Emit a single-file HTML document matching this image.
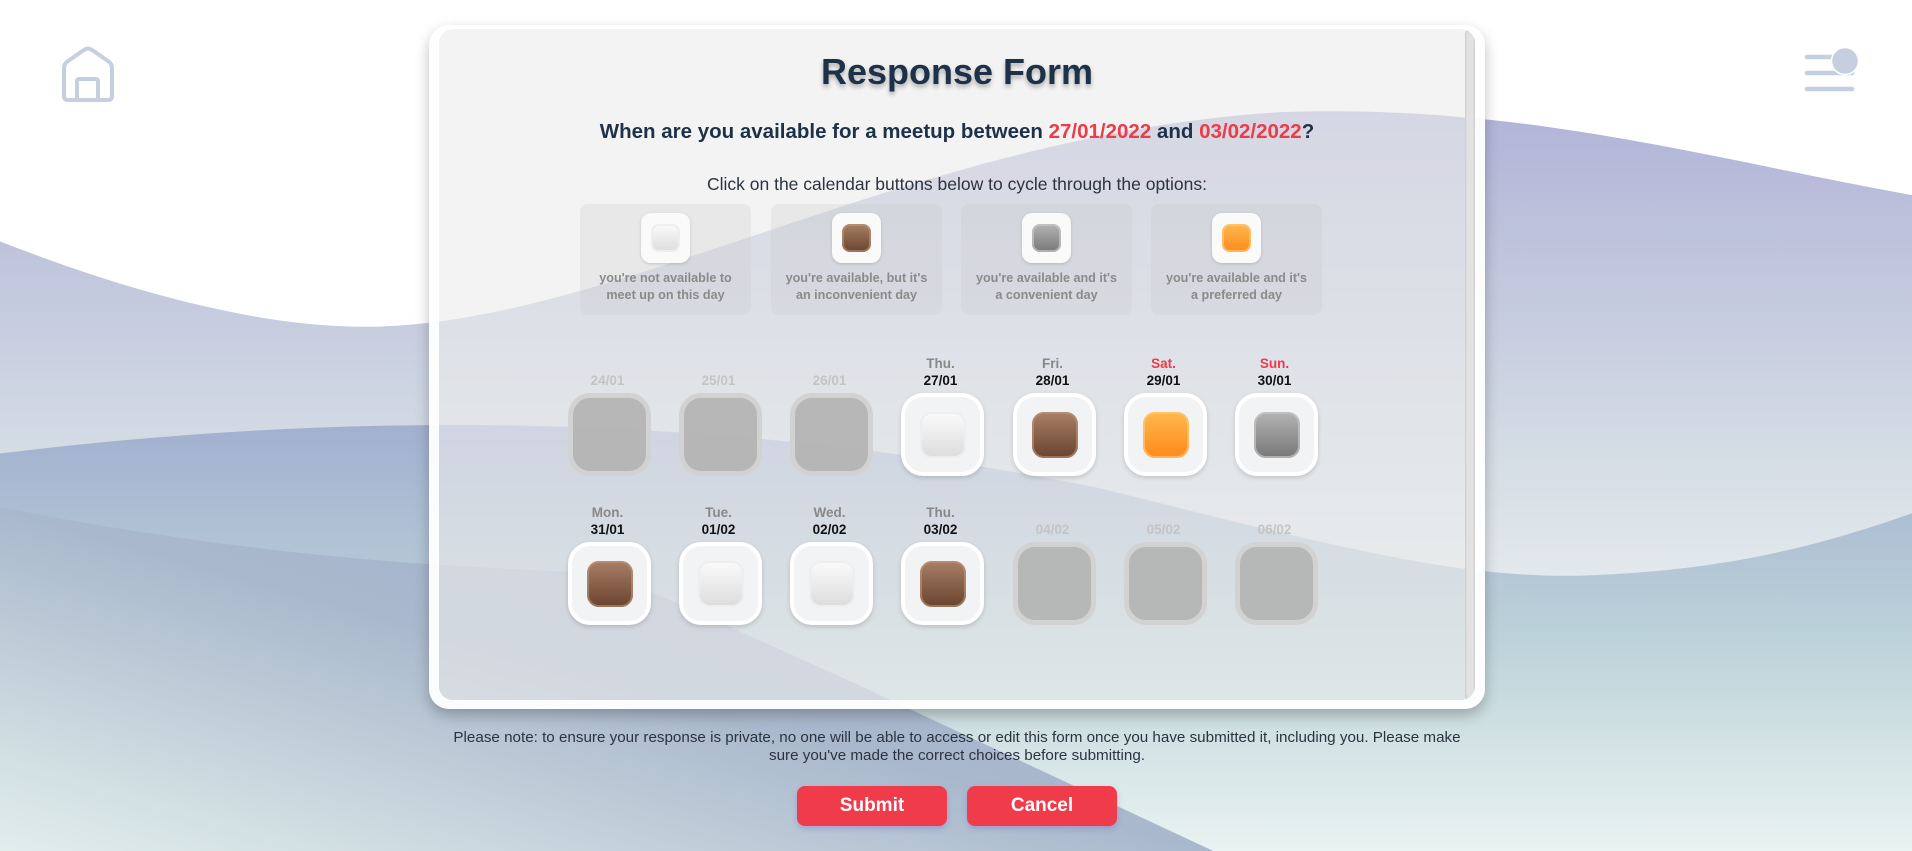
<!DOCTYPE html>
<html><head><meta charset="utf-8"><style>
*{margin:0;padding:0;box-sizing:border-box}
body{width:1912px;height:851px;overflow:hidden;position:relative;background:#fff;font-family:"Liberation Sans",sans-serif}
.bg{position:absolute;left:0;top:0}
.card{position:absolute;left:429px;top:25px;width:1056px;height:684px;border-radius:20px;background:rgba(255,255,255,.95);box-shadow:0 6px 14px rgba(0,0,0,.25)}
.panel{position:absolute;left:10px;top:4px;right:10px;bottom:9px;border-radius:14px;overflow:hidden}
.pbg{position:absolute;left:0;top:0;width:100%;height:100%;overflow:hidden}
.sb{position:absolute;right:0;top:0;width:10px;height:100%;background:#e2e2e2;border-radius:5px;box-shadow:inset 0 0 2px #aaa}
h1{position:absolute;left:0;width:100%;top:22px;text-align:center;font-size:36px;font-weight:bold;color:#1d3149;text-shadow:0 3px 5px rgba(0,0,0,.3)}
.q{position:absolute;left:0;width:100%;top:91px;text-align:center;font-size:20.5px;font-weight:bold;color:#1d3149}
.r{color:#ef3a48}
.ins{position:absolute;left:0;width:100%;top:145px;text-align:center;font-size:17.5px;color:#2c3340}
.leg{position:absolute;top:175px;width:171px;height:111px;border-radius:8px;background:rgba(200,200,205,.25)}
.leg .ic{position:absolute;left:61px;top:9px;width:49px;height:50px;border-radius:10px;background:#fafafa;box-shadow:0 1px 3px rgba(0,0,0,.15)}
.leg .ic i{position:absolute;left:10px;top:11px;width:29px;height:28px;border-radius:8px}
.leg p{position:absolute;top:66px;left:0;width:100%;text-align:center;font-size:12.6px;font-weight:bold;color:#8a8a8a;line-height:17px}
.wh{background:linear-gradient(#fbfbfb,#dcdcdc);box-shadow:inset 0 0 0 2px #eee}
.br{background:linear-gradient(#a88066,#6a432f);box-shadow:inset 0 0 0 2px rgba(190,150,120,.6)}
.gr{background:linear-gradient(#b4b4b4,#777);box-shadow:inset 0 0 0 2px rgba(200,200,200,.7)}
.or{background:linear-gradient(#ffb84d,#ff8a1c);box-shadow:inset 0 0 0 2px rgba(255,200,120,.7)}
.cell{position:absolute;width:83px;height:83px;border-radius:22px}
.on{background:#f2f3f5;border:4px solid #fff;box-shadow:0 2px 5px rgba(0,0,0,.15)}
.on i{position:absolute;left:14.5px;top:14.5px;width:46px;height:46px;border-radius:12px}
.off{background:#b5b5b5;border:5px solid #d2d2d2;opacity:.95}
.lb{position:absolute;width:111px;text-align:center;font-weight:bold;font-size:13.5px;line-height:17px}
.dn{color:#888}.dt{color:#111}.dd{color:#c4c4c4}.we{color:#ef3a48}
.note{position:absolute;left:429px;width:1056px;top:729px;text-align:center;font-size:15.2px;color:#2c3340;line-height:18px}
.btn{position:absolute;top:786px;width:150px;height:40px;border-radius:8px;background:#f03b4a;color:#fff;font-weight:bold;font-size:19px;text-align:center;line-height:40px;box-shadow:0 3px 6px rgba(120,100,200,.35)}
</style></head><body>
<svg class="bg" width="1912" height="851" viewBox="0 0 1568 698" preserveAspectRatio="none">
<defs>
<linearGradient id="a" x1="0" y1="0" x2="0" y2="1"><stop offset="0" stop-color="#b1b4d7"/><stop offset="0.45" stop-color="#d3dbe4"/><stop offset="0.75" stop-color="#edf3f2"/><stop offset="1" stop-color="#eef5f3"/></linearGradient>
<linearGradient id="b" x1="0" y1="0" x2="0" y2="1"><stop offset="0" stop-color="#a2b0cf"/><stop offset="0.5" stop-color="#bcd2d9"/><stop offset="1" stop-color="#e9f3f1"/></linearGradient>
<linearGradient id="c" x1="1" y1="0" x2="0" y2="1"><stop offset="0" stop-color="#a3aed3"/><stop offset="0.5" stop-color="#a9b8cc"/><stop offset="1" stop-color="#e2eeec"/></linearGradient>
</defs>
<path d="M0,198 C120,245 220,268 300,268 C500,268 750,110 1050,92 C1250,85 1400,130 1568,160 V698 H0Z" fill="url(#a)"/>
<path d="M0,372 C300,335 600,340 900,400 C1100,450 1200,475 1300,472 C1420,468 1500,445 1568,421 V698 H0Z" fill="url(#b)"/>
<path d="M0,416 C200,455 350,465 500,470 L700,560 L995,698 L0,698Z" fill="url(#c)"/>
</svg>

<svg style="position:absolute;left:60px;top:46px" width="56" height="58" viewBox="0 0 56 58"><path d="M4,22 Q4,18 8,15 L24,4 Q28,1 32,4 L48,15 Q52,18 52,22 L52,50 Q52,54 48,54 L8,54 Q4,54 4,50 Z" fill="none" stroke="#c6cfe0" stroke-width="4" stroke-linejoin="round"/><rect x="17" y="33" width="21" height="21" rx="2" fill="none" stroke="#c6cfe0" stroke-width="4"/></svg>
<svg style="position:absolute;left:1800px;top:44px" width="65" height="52"><g stroke="#c6cfe0" stroke-width="4.5" stroke-linecap="round"><line x1="7" y1="13" x2="40" y2="13"/><line x1="7" y1="29" x2="52" y2="29"/><line x1="7" y1="45" x2="52" y2="45"/></g><circle cx="45" cy="17" r="13.5" fill="#c6cfe0" stroke="#fff" stroke-width="1.5"/></svg>

<div class="card"><div class="panel">
<div class="pbg"><svg style="position:absolute;left:-439px;top:-29px" width="1912" height="851" viewBox="0 0 1568 698" preserveAspectRatio="none">
<rect width="1568" height="698" fill="#fff"/>
<path d="M0,198 C120,245 220,268 300,268 C500,268 750,110 1050,92 C1250,85 1400,130 1568,160 V698 H0Z" fill="url(#a)"/>
<path d="M0,372 C300,335 600,340 900,400 C1100,450 1200,475 1300,472 C1420,468 1500,445 1568,421 V698 H0Z" fill="url(#b)"/>
<path d="M0,416 C200,455 350,465 500,470 L700,560 L995,698 L0,698Z" fill="url(#c)"/>
<rect width="1568" height="698" fill="#ececec" fill-opacity="0.62"/>
</svg></div>
<h1>Response Form</h1>
<div class="q">When are you available for a meetup between <span class="r">27/01/2022</span> and <span class="r">03/02/2022</span>?</div>
<div class="ins">Click on the calendar buttons below to cycle through the options:</div>
<div class="leg" style="left:141px"><div class="ic"><i class="wh"></i></div><p>you're not available to<br>meet up on this day</p></div>
<div class="leg" style="left:332px"><div class="ic"><i class="br"></i></div><p>you're available, but it's<br>an inconvenient day</p></div>
<div class="leg" style="left:522px"><div class="ic"><i class="gr"></i></div><p>you're available and it's<br>a convenient day</p></div>
<div class="leg" style="left:712px"><div class="ic"><i class="or"></i></div><p>you're available and it's<br>a preferred day</p></div>

<div class="lb dd" style="left:113px;top:343px">24/01</div>
<div class="lb dd" style="left:224px;top:343px">25/01</div>
<div class="lb dd" style="left:335px;top:343px">26/01</div>
<div class="lb" style="left:446px;top:326px"><span class="dn">Thu.</span><br><span class="dt">27/01</span></div>
<div class="lb" style="left:558px;top:326px"><span class="dn">Fri.</span><br><span class="dt">28/01</span></div>
<div class="lb" style="left:669px;top:326px"><span class="we">Sat.</span><br><span class="dt">29/01</span></div>
<div class="lb" style="left:780px;top:326px"><span class="we">Sun.</span><br><span class="dt">30/01</span></div>

<div class="cell off" style="left:129px;top:364px"></div>
<div class="cell off" style="left:240px;top:364px"></div>
<div class="cell off" style="left:351px;top:364px"></div>
<div class="cell on" style="left:462px;top:364px"><i class="wh"></i></div>
<div class="cell on" style="left:574px;top:364px"><i class="br"></i></div>
<div class="cell on" style="left:685px;top:364px"><i class="or"></i></div>
<div class="cell on" style="left:796px;top:364px"><i class="gr"></i></div>

<div class="lb" style="left:113px;top:475px"><span class="dn">Mon.</span><br><span class="dt">31/01</span></div>
<div class="lb" style="left:224px;top:475px"><span class="dn">Tue.</span><br><span class="dt">01/02</span></div>
<div class="lb" style="left:335px;top:475px"><span class="dn">Wed.</span><br><span class="dt">02/02</span></div>
<div class="lb" style="left:446px;top:475px"><span class="dn">Thu.</span><br><span class="dt">03/02</span></div>
<div class="lb dd" style="left:558px;top:492px">04/02</div>
<div class="lb dd" style="left:669px;top:492px">05/02</div>
<div class="lb dd" style="left:780px;top:492px">06/02</div>

<div class="cell on" style="left:129px;top:513px"><i class="br"></i></div>
<div class="cell on" style="left:240px;top:513px"><i class="wh"></i></div>
<div class="cell on" style="left:351px;top:513px"><i class="wh"></i></div>
<div class="cell on" style="left:462px;top:513px"><i class="br"></i></div>
<div class="cell off" style="left:574px;top:513px"></div>
<div class="cell off" style="left:685px;top:513px"></div>
<div class="cell off" style="left:796px;top:513px"></div>
<div class="sb"></div>
</div></div>

<div class="note">Please note: to ensure your response is private, no one will be able to access or edit this form once you have submitted it, including you. Please make<br>sure you've made the correct choices before submitting.</div>
<div class="btn" style="left:797px">Submit</div>
<div class="btn" style="left:967px">Cancel</div>
</body></html>
